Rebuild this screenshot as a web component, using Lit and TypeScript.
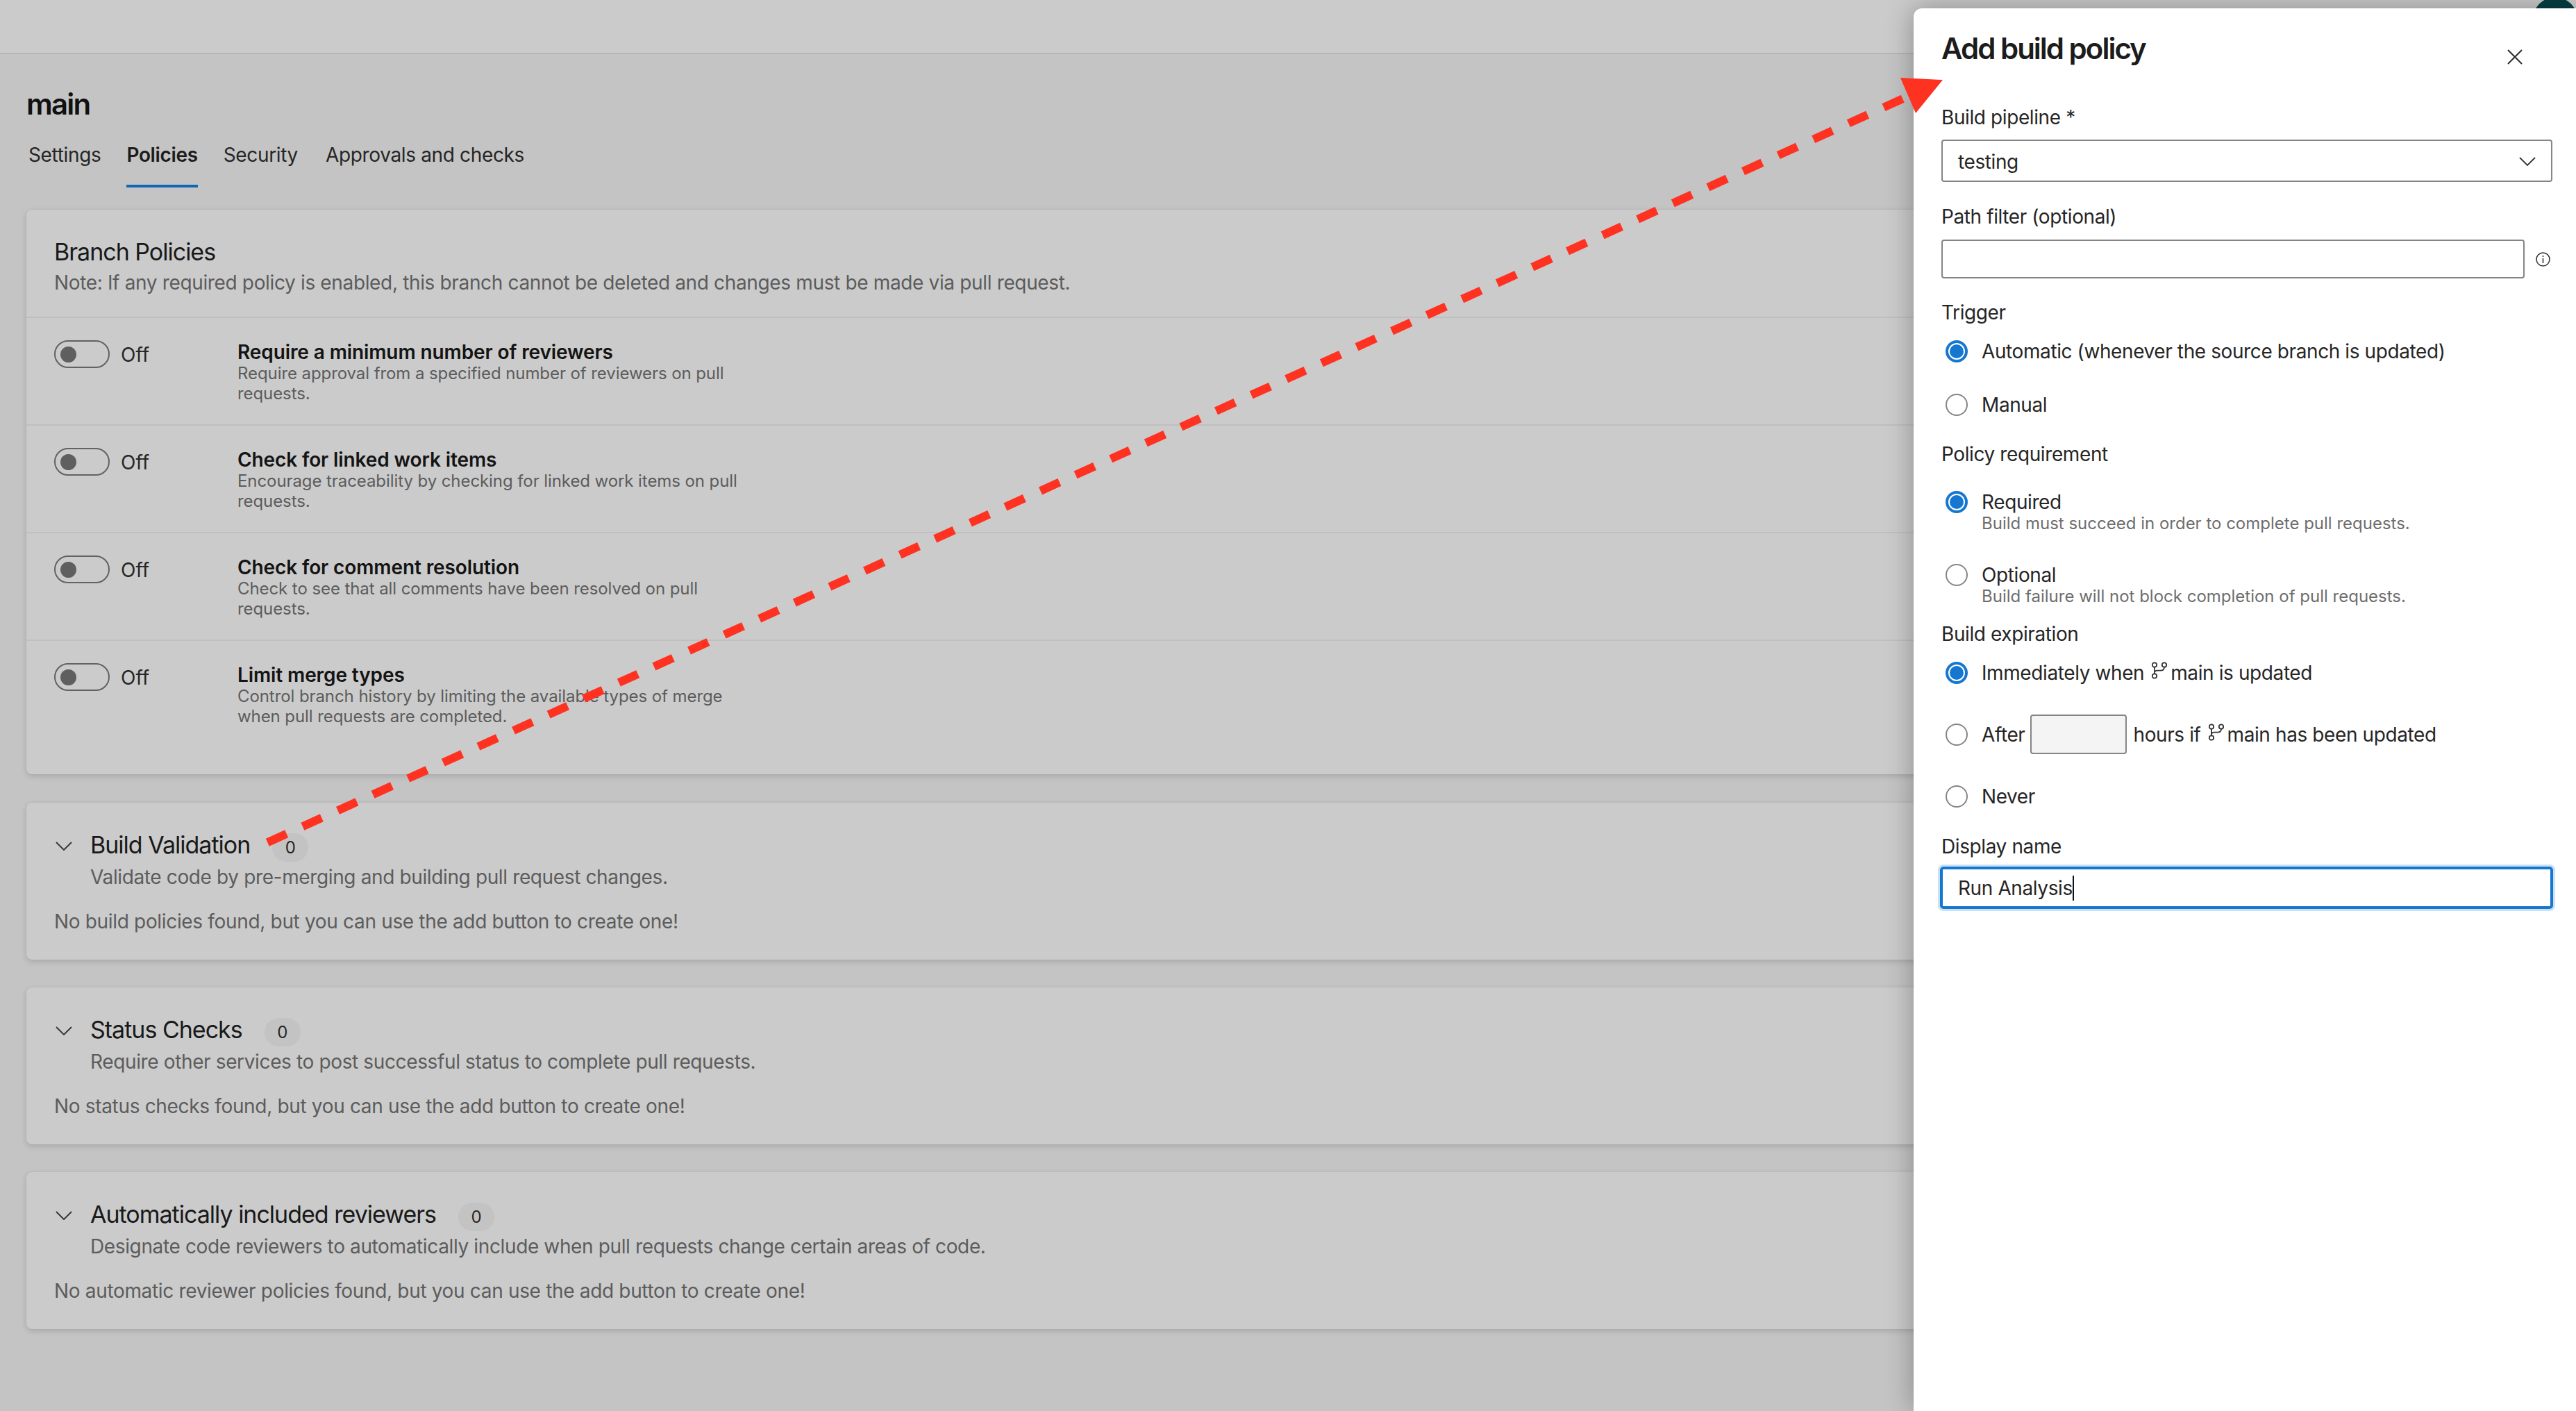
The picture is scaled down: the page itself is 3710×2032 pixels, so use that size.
import { LitElement, html, css, svg } from "lit";
import { customElement } from "lit/decorators.js";

const branchIcon = html`<svg class="branch" viewBox="0 0 22 25" width="22" height="25" fill="none" stroke="#333" stroke-width="1.8"><circle cx="4" cy="4.5" r="3.2"/><circle cx="18" cy="4.5" r="3.2"/><circle cx="4" cy="20.5" r="3.2"/><path d="M4 7.7v9.6M18 7.7c0 3.3-2 5-5.5 5H8c-2.600 0-4 1-4 3"/></svg>`;
const chevron = (w: number, h: number, cls: string, color: string) => html`<svg class=${cls} width=${w} height=${h} viewBox="0 0 24 13" fill="none" stroke=${color} stroke-width="1.8"><path d="M1 1l11 11L23 1"/></svg>`;

const policies = [
  ["Require a minimum number of reviewers", "Require approval from a specified number of reviewers on pull requests."],
  ["Check for linked work items", "Encourage traceability by checking for linked work items on pull requests."],
  ["Check for comment resolution", "Check to see that all comments have been resolved on pull requests."],
  ["Limit merge types", "Control branch history by limiting the available types of merge when pull requests are completed."],
];
const sections = [
  ["Build Validation", "Validate code by pre-merging and building pull request changes.", "No build policies found, but you can use the add button to create one!"],
  ["Status Checks", "Require other services to post successful status to complete pull requests.", "No status checks found, but you can use the add button to create one!"],
  ["Automatically included reviewers", "Designate code reviewers to automatically include when pull requests change certain areas of code.", "No automatic reviewer policies found, but you can use the add button to create one!"],
];

@customElement("app-root")
export class AppRoot extends LitElement {
  static styles = css`
    :host { display: block; position: relative; width: 3710px; height: 2032px; overflow: hidden; background: #c4c4c4; font-family: Inter, "Liberation Sans", sans-serif; font-size: 28px; line-height: 40px; letter-spacing: -0.4px; color: #262626; }
    * { box-sizing: border-box; }
    .top { height: 78px; background: #cbcbcb; border-bottom: 2px solid #b6b6b6; display: flex; align-items: flex-start; }
    .divider { width: 2px; height: 12px; background: #565656; }
    .d1 { margin-left: 2932px; }
    .d2 { margin-left: 396px; }
    .avatar { width: 64px; height: 64px; border-radius: 50%; background: #053f42; margin-top: -4px; margin-left: 320px; flex: none; }
    main { padding: 44px 40px 0 38px; letter-spacing: -0.35px; }
    h1 { margin: 0; font-size: 42px; line-height: 56px; font-weight: 600; color: #111; letter-spacing: -1.800px; }
    .tabs { display: flex; gap: 37px; margin: 25px 0 32px 3px; height: 67px; }
    .tab { height: 67px; }
    .tab.on { font-weight: 600; color: #1c1c1c; border-bottom: 4px solid #0f68b4; }
    .tab.last { margin-left: 3px; }
    .card { background: #cbcbcb; border-radius: 8px; box-shadow: 0 3px 8px rgba(0,0,0,.14), 0 0 2px rgba(0,0,0,.08); }
    .head { padding: 39px 40px 29px; border-bottom: 2px solid #bfbfbf; }
    h2 { margin: 0; font-size: 34px; line-height: 44px; font-weight: 400; color: #191919; letter-spacing: -1px; }
    .head p { margin: 2px 0 0; color: #5c5c5c; }
    .row { height: 155px; padding: 32px 0 0 40px; display: grid; grid-template-columns: 264px 1fr; border-bottom: 2px solid #bfbfbf; }
    .row.end { height: 192px; border-bottom: none; }
    .state { display: flex; align-items: flex-start; gap: 16px; }
    .toggle { width: 80px; height: 40px; border: 2px solid #626262; border-radius: 20px; padding: 7px 0 0 7px; }
    .knob { width: 23px; height: 23px; border-radius: 50%; background: #5f5f5f; }
    .off { color: #262626; letter-spacing: 0; padding-top: 1px; }
    .pt { font-weight: 600; line-height: 34px; color: #141414; letter-spacing: -0.1px; }
    .pd, .sub { font-size: 24px; line-height: 28.5px; color: #5c5c5c; letter-spacing: -0.08px; }
    .pd { max-width: 730px; }
    .sec { height: 226px; margin-top: 41px; margin-bottom: -1px; padding: 39px 40px 0; }
    .sec-head { display: flex; align-items: flex-start; }
    .chev-s { margin: 17px 26px 0 2px; flex: none; }
    .badge { width: 52px; height: 41px; line-height: 41px; border-radius: 21px; background: #c3c3c3; margin: 5px 0 0 32px; text-align: center; font-size: 24px; color: #262626; letter-spacing: 0; }
    .sec p { margin: 2px 0 0 52px; color: #5c5c5c; letter-spacing: -0.37px; }
    .sec p.none { margin: 24px 0 0; letter-spacing: -0.33px; }
    .panel { position: absolute; left: 2756px; top: 12px; right: 0; bottom: 0; background: #fff; border-top-left-radius: 12px; padding: 30px 34px 0 40px; box-shadow: 0 0 40px rgba(0,0,0,.32); }
    .p-head { display: flex; justify-content: space-between; align-items: flex-start; height: 56px; margin-bottom: 51px; }
    .p-head h3 { margin: 0; font-size: 42px; line-height: 56px; font-weight: 600; color: #1c1c1c; letter-spacing: -2px; }
    .close { margin: 29px 43px 0 0; }
    .select, .input { border: 2px solid #858585; border-radius: 4px; display: flex; align-items: center; }
    .select { height: 61px; margin-top: 12px; padding: 2px 22px 0; justify-content: space-between; }
    .filter { display: flex; align-items: center; justify-content: space-between; margin-top: 13px; }
    .input { width: 840px; height: 56px; }
    .info { margin-right: 3px; }
    .lbl { margin-top: 30px; }
    .opt { display: flex; align-items: center; height: 40px; white-space: pre; }
    .radio { width: 32px; height: 32px; flex: none; border-radius: 50%; border: 2px solid #858585; margin: 0 20px 0 6px; background: #fff; }
    .radio.on { border: 4px solid #1577cf; padding: 2px; background: #1577cf content-box; }
    .sub-opt { display: grid; grid-template-columns: 58px 1fr; line-height: 34px; }
    .sub-opt .radio { margin-top: 1px; }
    .sub { line-height: 28px; color: #6e6e6e; letter-spacing: 0; }
    .branch { margin: -7px 5px 0 11px; flex: none; }
    .hours { width: 139px; height: 57px; background: #f4f4f4; border: 2px solid #858585; border-radius: 4px; margin: 0 9px 0 8px; }
    .focus { height: 61px; margin: 9px -1px 0 -2px; border: 4px solid #1577cf; border-radius: 5px; box-shadow: 0 0 0 3px #c9e1f5; display: flex; align-items: center; padding-left: 22px; }
    .caret { width: 2px; height: 36px; background: #111; }
  `;

  render() {
    const dashes = Array.from({ length: 47 }, (_, i) => {
      const cx = 399 + i * 50.6, cy = 1207 - i * 50.6 * 0.4548;
      const dx = 13.7, dy = 6.2;
      return svg`<line x1=${cx - dx} y1=${cy + dy} x2=${cx + dx} y2=${cy - dy}/>`;
    });
    return html`
      <div class="top"><div class="divider d1"></div><div class="divider d2"></div><div class="avatar"></div></div>
      <main>
        <h1>main</h1>
        <div class="tabs"><div class="tab">Settings</div><div class="tab on">Policies</div><div class="tab">Security</div><div class="tab last">Approvals and checks</div></div>
        <section class="card">
          <div class="head"><h2>Branch Policies</h2><p>Note: If any required policy is enabled, this branch cannot be deleted and changes must be made via pull request.</p></div>
          ${policies.map((p, i) => html`<div class="row ${i === 3 ? "end" : ""}">
            <div class="state"><div class="toggle"><div class="knob"></div></div><span class="off">Off</span></div>
            <div><div class="pt">${p[0]}</div><div class="pd">${p[1]}</div></div>
          </div>`)}
        </section>
        ${sections.map(s => html`<section class="card sec">
          <div class="sec-head">${chevron(24, 13, "chev-s", "#333")}<h2>${s[0]}</h2><div class="badge">0</div></div>
          <p>${s[1]}</p><p class="none">${s[2]}</p>
        </section>`)}
      </main>
      <aside class="panel">
        <div class="p-head"><h3>Add build policy</h3><svg class="close" width="22" height="22" viewBox="0 0 22 22" stroke="#2b2b2b" stroke-width="2"><path d="M1 1l20 20M21 1L1 21"/></svg></div>
        <div>Build pipeline *</div>
        <div class="select"><span>testing</span>${chevron(24, 13, "", "#333")}</div>
        <div class="lbl">Path filter (optional)</div>
        <div class="filter"><div class="input"></div><svg class="info" width="21" height="21" viewBox="0 0 21 21" fill="none" stroke="#333" stroke-width="1.6"><circle cx="10.500" cy="10.500" r="9.500"/><path d="M10.500 9v7M10.500 5v2"/></svg></div>
        <div style="margin-top:29px">Trigger</div>
        <div class="opt" style="margin-top:16px"><div class="radio on"></div>Automatic (whenever the source branch is updated)</div>
        <div class="opt" style="margin-top:37px"><div class="radio"></div>Manual</div>
        <div style="margin-top:31px">Policy requirement</div>
        <div class="sub-opt" style="margin-top:32px"><div class="radio on"></div><div>Required<div class="sub">Build must succeed in order to complete pull requests.</div></div></div>
        <div class="sub-opt" style="margin-top:43px"><div class="radio"></div><div>Optional<div class="sub">Build failure will not block completion of pull requests.</div></div></div>
        <div style="margin-top:20px">Build expiration</div>
        <div class="opt" style="margin-top:16px"><div class="radio on"></div>Immediately when${branchIcon}main is updated</div>
        <div class="opt" style="margin-top:40px;height:57px"><div class="radio"></div>After<div class="hours"></div>hours if${branchIcon}main has been updated</div>
        <div class="opt" style="margin-top:41px"><div class="radio"></div>Never</div>
        <div style="margin-top:32px">Display name</div>
        <div class="focus"><span>Run Analysis</span><div class="caret"></div></div>
      </aside>
      <svg style="position:absolute;left:0;top:0;pointer-events:none" width="3710" height="2032" fill="#ff3222" stroke="#ff3222" stroke-width="12">${dashes}<polygon stroke="none" points="2737,112 2798,115 2759,163"/></svg>
    `;
  }
}
